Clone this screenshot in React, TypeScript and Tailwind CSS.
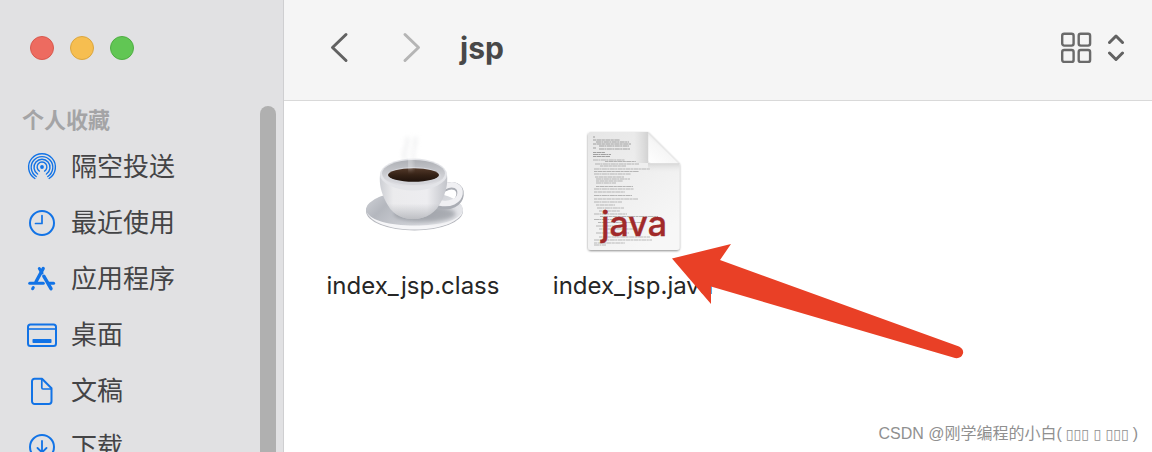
import React from 'react';

interface SidebarItem {
  label: string;
  icon: React.ReactNode;
}

const AirDropIcon = () => (
  <svg width="30" height="30" viewBox="0 0 30 30" fill="none" stroke="#1273e6" strokeWidth="1.4" strokeLinecap="round">
    <circle cx="15" cy="15" r="1.9" fill="#1273e6" stroke="none" />
    <path d="M12.400 19.100a4.900 4.900 0 1 1 5.200 0" />
    <path d="M10.600 22a8 8 0 1 1 8.800 0" />
    <path d="M9.200 24.500a10.800 10.800 0 1 1 11.600 0" />
    <path d="M7.900 26.500a13.400 13.400 0 1 1 14.200 0" />
  </svg>
);

const ClockIcon = () => (
  <svg width="30" height="30" viewBox="0 0 30 30" fill="none" stroke="#1273e6" strokeWidth="2" strokeLinecap="round" strokeLinejoin="round">
    <circle cx="15" cy="15" r="12" />
    <path d="M15 7.5v8H8.5" strokeWidth="1.7" />
  </svg>
);

const AppsIcon = () => (
  <svg width="30" height="30" viewBox="0 0 30 30" fill="none" stroke="#1273e6" strokeWidth="3" strokeLinecap="round">
    <path d="M16.2 4.5 9 17.8" strokeWidth="3.4" />
    <path d="M12.3 4.5 15 9" />
    <path d="M2.7 19.3h13.6" />
    <path d="M22 19.3h4.6" />
    <path d="M16.8 12.2 24 24.7" strokeWidth="3.4" />
    <path d="M6.3 23.6 5.6 24.8" />
  </svg>
);

const DesktopIcon = () => (
  <svg width="30" height="30" viewBox="0 0 30 30" fill="none" stroke="#1273e6" strokeWidth="2">
    <rect x="1" y="4.5" width="28" height="21.5" rx="2.5" />
    <path d="M1 9h28" strokeWidth="1.6" />
    <rect x="5.5" y="19" width="19" height="4" rx="0.8" fill="#1273e6" stroke="none" />
  </svg>
);

const DocumentIcon = () => (
  <svg width="30" height="30" viewBox="0 0 30 30" fill="none" stroke="#1273e6" strokeWidth="2" strokeLinejoin="round">
    <path d="M7.500 2.700h7.500L24.500 12.200v13.100a2.700 2.700 0 0 1-2.700 2.700H7.700A2.700 2.700 0 0 1 5 25.300V5.200a2.500 2.500 0 0 1 2.500-2.500Z" />
    <path d="M14.800 3v8.800a1.200 1.200 0 0 0 1.200 1.200h8.500" strokeWidth="1.7" />
  </svg>
);

const DownloadIcon = () => (
  <svg width="30" height="30" viewBox="0 0 30 30" fill="none" stroke="#1273e6" strokeWidth="2" strokeLinecap="round" strokeLinejoin="round">
    <circle cx="15" cy="15" r="12" />
    <path d="M15 9v11.5M10.5 16l4.5 4.5 4.5-4.5" strokeWidth="1.8" />
  </svg>
);

const sidebarItems: SidebarItem[] = [
  { label: '隔空投送', icon: <AirDropIcon /> },
  { label: '最近使用', icon: <ClockIcon /> },
  { label: '应用程序', icon: <AppsIcon /> },
  { label: '桌面', icon: <DesktopIcon /> },
  { label: '文稿', icon: <DocumentIcon /> },
  { label: '下载', icon: <DownloadIcon /> },
];

const CoffeeIcon = () => (
  <svg width="128" height="128" viewBox="0 0 128 128">
    <defs>
      <linearGradient id="saucer" x1="0" y1="0" x2="1" y2="0.4">
        <stop offset="0" stopColor="#d3d5da" />
        <stop offset="0.3" stopColor="#b4b7be" />
        <stop offset="1" stopColor="#e4e5e9" />
      </linearGradient>
      <linearGradient id="cup" x1="0" y1="0" x2="1" y2="0">
        <stop offset="0" stopColor="#cdcfd4" />
        <stop offset="0.2" stopColor="#ebebed" />
        <stop offset="0.7" stopColor="#ededf0" />
        <stop offset="1" stopColor="#c2c4ca" />
      </linearGradient>
      <linearGradient id="cupShade" x1="0" y1="0" x2="0" y2="1">
        <stop offset="0.65" stopColor="#8f9299" stopOpacity="0" />
        <stop offset="1" stopColor="#8f9299" stopOpacity="0.5" />
      </linearGradient>
      <linearGradient id="rim" x1="0" y1="0" x2="0" y2="1">
        <stop offset="0" stopColor="#aeb0b5" />
        <stop offset="1" stopColor="#e4e4e8" />
      </linearGradient>
      <linearGradient id="coffee" x1="0" y1="0" x2="0" y2="1">
        <stop offset="0" stopColor="#53392a" />
        <stop offset="0.5" stopColor="#352216" />
        <stop offset="1" stopColor="#1e120c" />
      </linearGradient>
      <filter id="soft" x="-50%" y="-50%" width="200%" height="200%">
        <feGaussianBlur stdDeviation="2" />
      </filter>
    </defs>
    <path d="M57 32c-6-8 4-13 1-23M65 32c-5-9 4-14 1-23" fill="none" stroke="#e4e5e7" strokeWidth="4" opacity="0.5" filter="url(#soft)" />
    <ellipse cx="65.500" cy="83" rx="48.500" ry="19.500" fill="#b6b8be" />
    <ellipse cx="65.500" cy="82" rx="48.500" ry="19" fill="url(#saucer)" />
    <path d="M17.500 84c4 10 22 17.500 48 17.500s45-7.500 48-18c-4 9-22 14-48 14s-43-5-48-13.500Z" fill="#f6f6f8" />
    <ellipse cx="76" cy="86" rx="31" ry="8" fill="#747981" opacity="0.5" filter="url(#soft)" />
    <path d="M95 60c9-5 17-1 16 7-1 8-10 12-20 10" fill="none" stroke="#aaadb4" strokeWidth="7.500" strokeLinecap="round" />
    <path d="M95 59c9-5 17-1 16 7-1 7-10 11-20 9" fill="none" stroke="#f0f0f3" strokeWidth="5.500" strokeLinecap="round" />
    <path d="M31 47c-1 8 1 18 6 27 5 10 13 17 27 17s23-7 28-17c5-9 7-19 6-27Z" fill="url(#cup)" />
    <path d="M31 47c-1 8 1 18 6 27 5 10 13 17 27 17s23-7 28-17c5-9 7-19 6-27Z" fill="url(#cupShade)" />
    <ellipse cx="64.500" cy="46.500" rx="33.500" ry="16" fill="#e3e4e8" />
    <ellipse cx="64.500" cy="45.500" rx="31.500" ry="13.500" fill="url(#rim)" />
    <ellipse cx="64.500" cy="48" rx="27.500" ry="9" fill="#d3d4d9" />
    <ellipse cx="64.500" cy="47" rx="25.500" ry="6.800" fill="url(#coffee)" />
    <path d="M62 42c-3-8 0-16 2-25" fill="none" stroke="#fff" strokeWidth="5" opacity="0.35" filter="url(#soft)" />
  </svg>
);

// x, y, length of each line of the miniature source listing
const codeLines = [
  [24, 9, 2], [24, 12, 27], [27, 14, 33], [24, 16, 38], [30, 18, 30], [24, 20, 3], [30, 21, 31],
  [24, 24.500, 12], [24, 26.500, 18], [24, 28.500, 17], [24, 32, 32], [36, 33.500, 31], [26, 36, 44], [31, 38, 26],
  [25, 41, 56], [25, 43.500, 45], [25, 46, 37], [26, 49, 29], [27, 51, 34], [27, 53, 27], [27, 55, 20],
  [27, 58.500, 37], [25, 61, 40], [25, 64, 31], [25, 67.500, 38], [25, 71, 44], [25, 74, 28],
  [27, 77, 19], [28, 80, 27], [30, 83, 21], [25, 86, 33], [31, 88.500, 58], [25, 91.500, 23],
  [29, 94.500, 45], [27, 98, 31], [30, 101, 43], [27, 105, 33], [30, 109, 51], [25, 112, 58], [25, 115, 31], [25, 117, 12],
];

const JavaFileIcon = () => (
  <svg width="128" height="128" viewBox="0 0 128 128">
    <defs>
      <linearGradient id="page" x1="0" y1="0" x2="0.6" y2="1">
        <stop offset="0" stopColor="#e6e6e6" />
        <stop offset="1" stopColor="#f7f7f7" />
      </linearGradient>
      <linearGradient id="fold" x1="0" y1="1" x2="0.6" y2="0.3">
        <stop offset="0" stopColor="#ffffff" />
        <stop offset="0.7" stopColor="#f6f6f6" />
        <stop offset="1" stopColor="#dcdcdc" />
      </linearGradient>
      <linearGradient id="foldShade" x1="0" y1="0" x2="1" y2="0">
        <stop offset="0" stopColor="#c4c4c4" stopOpacity="0" />
        <stop offset="1" stopColor="#b8b8b8" />
      </linearGradient>
      <linearGradient id="foldDrop" x1="0" y1="0" x2="0" y2="1">
        <stop offset="0" stopColor="#c2c2c2" />
        <stop offset="1" stopColor="#ededed" stopOpacity="0" />
      </linearGradient>
      <filter id="pageShadow" x="-10%" y="-10%" width="120%" height="120%">
        <feDropShadow dx="0" dy="1" stdDeviation="1.2" floodColor="#000" floodOpacity="0.45" />
      </filter>
    </defs>
    <path d="M22 4h57l31.500 31.500V119a3 3 0 0 1-3 3H22a3 3 0 0 1-3-3V7a3 3 0 0 1 3-3Z" fill="url(#page)" filter="url(#pageShadow)" />
    <path d="M65 4h14v31H65Z" fill="url(#foldShade)" opacity="0.5" />
    <path d="M79 35h31.500v10H79Z" fill="url(#foldDrop)" opacity="0.6" />
    {codeLines.map(([x, y, length], index) => (
      <line
        key={index}
        x1={x}
        y1={y}
        x2={x + length}
        y2={y}
        stroke="#666"
        strokeWidth="0.7"
        strokeDasharray={index % 2 ? '3 0.5 5 0.4' : '5 0.4 2 0.5'}
        opacity={index < 10 ? 0.8 : 0.6}
      />
    ))}
    <path d="M79 4.500 110 35.500H82a3 3 0 0 1-3-3Z" fill="url(#fold)" stroke="#d5d5d5" strokeWidth="0.5" />
    <text x="65" y="108" textAnchor="middle" fill="#a12a2a" stroke="#a12a2a" strokeWidth="0.4" fontSize="34" fontWeight="500" fontFamily="Inter, sans-serif">
      java
    </text>
  </svg>
);

const files = [
  { name: 'index_jsp.class', icon: <CoffeeIcon /> },
  { name: 'index_jsp.java', icon: <JavaFileIcon /> },
];

const Sidebar = () => (
  <aside className="relative w-71 shrink-0 overflow-hidden border-r border-[#cfcfd1] bg-[#e1e1e3]">
    <div className="flex gap-4 pt-9 pl-7.5">
      <button aria-label="关闭" className="size-6 rounded-full border border-[#d8594e] bg-[#ed6b60]" />
      <button aria-label="最小化" className="size-6 rounded-full border border-[#dba63f] bg-[#f6be50]" />
      <button aria-label="缩放" className="size-6 rounded-full border border-[#4fae43] bg-[#61c654]" />
    </div>
    <h2 className="mt-11 pl-5.5 text-[22px] leading-8 font-bold text-[#a4a4a6]">个人收藏</h2>
    <nav className="mt-[3px]">
      {sidebarItems.map((item) => (
        <a key={item.label} href="#" className="flex h-14 items-center gap-3.5 pl-[27px] text-[26px] leading-9 text-[#444446]">
          <span className="flex size-7.5 shrink-0 items-center justify-center">{item.icon}</span>
          <span>{item.label}</span>
        </a>
      ))}
    </nav>
    <div className="absolute top-26.5 right-[7px] -bottom-4 w-4 rounded-full bg-[#b0b0b0]" />
  </aside>
);

const Toolbar = () => (
  <header className="flex h-[101px] shrink-0 items-center border-b border-[#d9d9d9] bg-[#f5f5f5] pr-6 pb-1 pl-11">
    <button aria-label="后退">
      <svg width="24" height="32" viewBox="0 0 24 32" fill="none" stroke="#626262" strokeWidth="3" strokeLinecap="round" strokeLinejoin="round">
        <path d="M18 2.500 4.500 15.500 18 28.500" />
      </svg>
    </button>
    <button aria-label="前进" className="ml-12">
      <svg width="24" height="32" viewBox="0 0 24 32" fill="none" stroke="#b5b5b5" strokeWidth="3" strokeLinecap="round" strokeLinejoin="round">
        <path d="M5 2.500 18.500 15.500 5 28.500" />
      </svg>
    </button>
    <h1 className="ml-9 text-[30px] leading-10 font-bold text-[#484848]">jsp</h1>
    <button aria-label="显示方式" className="ml-auto flex items-center gap-4">
      <svg width="32" height="32" viewBox="0 0 32 32" fill="none" stroke="#6a6a6a" strokeWidth="2.400">
        <rect x="2.200" y="1.700" width="11.400" height="11.900" rx="2" />
        <rect x="18.700" y="1.700" width="11.400" height="11.900" rx="2" />
        <rect x="2.200" y="18" width="11.400" height="11.900" rx="2" />
        <rect x="18.700" y="18" width="11.400" height="11.900" rx="2" />
      </svg>
      <svg width="20" height="32" viewBox="0 0 20 32" fill="none" stroke="#626262" strokeWidth="3" strokeLinecap="round" strokeLinejoin="round">
        <path d="M1.500 10.500 8 4l6.500 6.500M1.500 21 8 27.500l6.500-6.500" />
      </svg>
    </button>
  </header>
);

const App: React.FC = () => {
  return (
    <div className="flex h-screen overflow-hidden bg-white font-[Inter,'Noto_Sans_CJK_SC',sans-serif]">
      <Sidebar />
      <main className="relative flex min-w-0 flex-1 flex-col">
        <Toolbar />
        <ul className="flex flex-1 flex-wrap content-start px-[19px] pt-[27px]">
          {files.map((file) => (
            <li key={file.name} className="flex w-55 flex-col items-center">
              {file.icon}
              <span className="mt-3 text-[24px] leading-9 text-[#262626]">{file.name}</span>
            </li>
          ))}
        </ul>
        <svg className="absolute top-60 left-96" width="300" height="124" viewBox="0 0 300 124" fill="#e94026">
          <path d="M4 18.500 63 4 52 20 291 106.500Q296 109 295 113.500 293 119 287 118L43 46.500V64Z" />
        </svg>
        <footer className="absolute right-3.5 bottom-1 flex items-center font-['Liberation_Sans','Noto_Sans_CJK_SC',sans-serif] text-base leading-7 text-[#909090]">
          <span>CSDN @刚学编程的小白(</span>
          <span className="mx-1 font-['DejaVu_Sans'] text-sm leading-7">▯▯▯ ▯ ▯▯▯</span>
          <span>)</span>
        </footer>
      </main>
    </div>
  );
};

export default App;
